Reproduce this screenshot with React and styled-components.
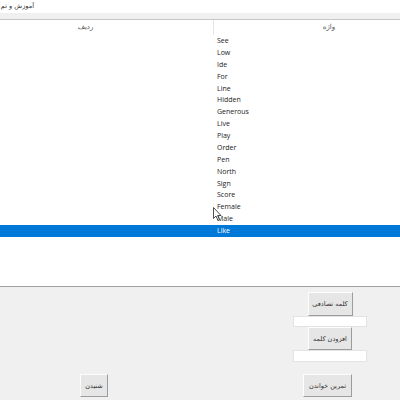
import React from "react";
import styled, { createGlobalStyle } from "styled-components";

const Global = createGlobalStyle`
  html, body { margin: 0; padding: 0; background: #f0f0f0; }
  body { width: 400px; height: 400px; overflow: hidden; font-family: "Open Sans", "DejaVu Sans", sans-serif; }
`;

const Window = styled.div`
  width: 400px;
  height: 400px;
  display: flex;
  flex-direction: column;
  position: relative;
  background: #f0f0f0;
`;

const TitleBar = styled.div`
  height: 13px;
  background: #fff;
  display: flex;
`;

const TitleText = styled.div`
  width: 34px;
  direction: rtl;
  white-space: nowrap;
  font-family: "DejaVu Sans", sans-serif;
  font-size: 6.5px;
  line-height: 13px;
  color: #333;
`;

const Strip = styled.div`
  height: 6px;
  background: #f0f0f0;
  border-bottom: 1px solid #c6c6c6;
`;

const ListView = styled.div`
  height: 266px;
  background: #fff;
  border-bottom: 1px solid #a0a0a0;
  display: flex;
  flex-direction: column;
`;

const Header = styled.div`
  height: 15px;
  display: grid;
  grid-template-columns: 214px 1fr;
  font-family: "DejaVu Sans", sans-serif;
  font-size: 7px;
  line-height: 15px;
  color: #555;
`;

const HeadCell = styled.div`
  text-align: center;
  padding-left: ${(p) => p.$pl || 0}px;
  padding-right: ${(p) => p.$pr || 0}px;
  border-right: ${(p) => (p.$divider ? "1px solid #e5e5e5" : "none")};
`;

const Row = styled.div`
  height: 11.875px;
  display: grid;
  grid-template-columns: 214px 1fr;
  background: ${(p) => (p.$selected ? "#0078d7" : "transparent")};
  color: ${(p) => (p.$selected ? "#fff" : "#222")};
  font-size: 7px;
  line-height: 11.875px;
`;

const WordCell = styled.div`
  padding-left: 3px;
  white-space: nowrap;
`;

const Panel = styled.div`
  flex: 1;
  display: flex;
  flex-direction: column;
  padding-top: 5px;
`;

const RightStack = styled.div`
  margin-left: 293px;
  width: 74px;
  display: flex;
  flex-direction: column;
  align-items: center;
`;

const Button = styled.div`
  box-sizing: border-box;
  width: ${(p) => p.$w}px;
  height: ${(p) => p.$h}px;
  background: #e6e6e6;
  border: 1px solid;
  border-color: #fdfdfd #9c9c9c #9c9c9c #fdfdfd;
  display: flex;
  align-items: center;
  justify-content: center;
  font-family: "DejaVu Sans", sans-serif;
  font-size: 6.5px;
  color: #333;
  direction: rtl;
  white-space: nowrap;
`;

const TextBox = styled.div`
  box-sizing: border-box;
  width: 74px;
  height: ${(p) => p.$h}px;
  background: #fff;
  border: 1px solid #e3e3e3;
`;

const BottomRow = styled.div`
  margin-top: 12px;
  padding-left: 80px;
  display: flex;
  align-items: flex-start;
  gap: 195px;
`;

const Cursor = styled.svg`
  position: absolute;
  left: 213px;
  top: 207px;
`;

const words = [
  "See", "Low", "Ide", "For", "Line", "Hidden", "Generous", "Live", "Play",
  "Order", "Pen", "North", "Sign", "Score", "Female", "Male", "Like",
];

export default function App() {
  return (
    <>
      <Global />
      <Window>
        <TitleBar>
          <TitleText>آموزش و تم</TitleText>
        </TitleBar>
        <Strip />
        <ListView>
          <Header>
            <HeadCell $pr={42} $divider>ردیف</HeadCell>
            <HeadCell $pl={44}>واژه</HeadCell>
          </Header>
          {words.map((w) => (
            <Row key={w} $selected={w === "Like"}>
              <div />
              <WordCell>{w}</WordCell>
            </Row>
          ))}
        </ListView>
        <Panel>
          <RightStack>
            <Button $w={45} $h={24}>کلمه تصادفی</Button>
            <TextBox $h={11} />
            <Button $w={44} $h={23}>افزودن کلمه</Button>
            <TextBox $h={12} />
          </RightStack>
          <BottomRow>
            <Button $w={28} $h={23}>شنیدن</Button>
            <Button $w={49} $h={23}>تمرین خواندن</Button>
          </BottomRow>
        </Panel>
        <Cursor width="10" height="15" viewBox="0 0 10 15">
          <path d="M0.5 0.5 L0.5 11.5 L3 9 L5 13.5 L6.5 12.8 L4.6 8.5 L8 8.5 Z" fill="#fff" stroke="#222" strokeWidth="0.8" strokeLinejoin="round" />
        </Cursor>
      </Window>
    </>
  );
}
